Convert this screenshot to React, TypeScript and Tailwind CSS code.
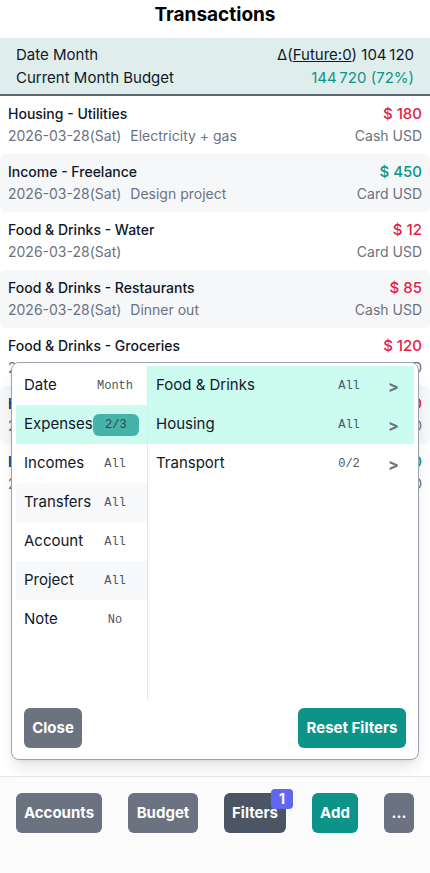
import React from "react";

type Row = { title: string; amount: string; income?: boolean; date: string; note?: string; acct: string };

const rows: Row[] = [
  { title: "Housing - Utilities", amount: "$ 180", date: "2026-03-28(Sat)", note: "Electricity + gas", acct: "Cash USD" },
  { title: "Income - Freelance", amount: "$ 450", income: true, date: "2026-03-28(Sat)", note: "Design project", acct: "Card USD" },
  { title: "Food & Drinks - Water", amount: "$ 12", date: "2026-03-28(Sat)", acct: "Card USD" },
  { title: "Food & Drinks - Restaurants", amount: "$ 85", date: "2026-03-28(Sat)", note: "Dinner out", acct: "Cash USD" },
  { title: "Food & Drinks - Groceries", amount: "$ 120", date: "2026-03-27(Fri)", note: "Weekly shopping", acct: "Card USD" },
  { title: "Housing - Rent", amount: "$ 1 200", date: "2026-03-25(Wed)", note: "March rent", acct: "Bank USD" },
  { title: "Income - Salary", amount: "$ 3 400", income: true, date: "2026-03-25(Wed)", note: "Monthly salary", acct: "Bank USD" },
];

const leftItems: { label: string; value: string; active?: boolean; badge?: boolean; alt?: boolean }[] = [
  { label: "Date", value: "Month" },
  { label: "Expenses", value: "2/3", active: true, badge: true },
  { label: "Incomes", value: "All" },
  { label: "Transfers", value: "All", alt: true },
  { label: "Account", value: "All" },
  { label: "Project", value: "All", alt: true },
  { label: "Note", value: "No" },
];

const rightItems: { label: string; value: string; active?: boolean }[] = [
  { label: "Food & Drinks", value: "All", active: true },
  { label: "Housing", value: "All", active: true },
  { label: "Transport", value: "0/2" },
];

export default function App() {
  return (
    <div className="relative flex h-[873px] w-[430px] flex-col overflow-hidden bg-white font-[family-name:Inter,'Liberation_Sans',sans-serif] text-[#111827]">
      {/* Header */}
      <div className="flex h-[38px] shrink-0 justify-center pt-px">
        <h1 className="text-[19px] font-bold leading-7 text-black">Transactions</h1>
      </div>

      {/* Summary */}
      <div className="shrink-0 border-b-2 border-[#5b6670] bg-[#dfeeed] px-4 py-[5px] text-[15px] leading-[23px]">
        <div className="flex justify-between">
          <span>Date Month</span>
          <span>
            Δ(<span className="underline">Future:0</span>) 104&#8201;120
          </span>
        </div>
        <div className="flex justify-between">
          <span>Current Month Budget</span>
          <span className="text-[#0d9488]">144&#8201;720 (72%)</span>
        </div>
      </div>

      {/* List */}
      <div className="min-h-0 flex-1 overflow-hidden">
        {rows.map((r, i) => (
          <div
            key={i}
            className={`rounded-md px-2 pb-[7px] pt-[7px] text-[14px] leading-[22px] ${i % 2 === 1 ? "bg-[#f6f7f9]" : "bg-white"}`}
          >
            <div className="flex justify-between">
              <span className="font-medium text-[#111827]">{r.title}</span>
              <span className={`text-[15px] font-medium ${r.income ? "text-[#0d9488]" : "text-[#e11d48]"}`}>{r.amount}</span>
            </div>
            <div className="flex justify-between text-[#6b7280]">
              <span>
                {r.date}
                {r.note ? <span className="ml-[9px]">{r.note}</span> : null}
              </span>
              <span>{r.acct}</span>
            </div>
          </div>
        ))}
      </div>

      {/* Bottom bar */}
      <div className="h-[97px] shrink-0 border-t border-[#e5e7eb] bg-[#fbfbfb] pt-[16px]">
        <div className="flex gap-[26px] px-4 text-[15px] font-bold leading-5 text-white">
          <button className="h-10 w-[86px] rounded-md bg-[#6b7280]">Accounts</button>
          <button className="h-10 w-[70px] rounded-md bg-[#6b7280]">Budget</button>
          <button className="relative h-10 w-[62px] rounded-md bg-[#4b5563]">
            Filters
            <span className="absolute -right-[7px] -top-[4px] flex h-5 w-[22px] items-center justify-center rounded bg-[#6366f1] text-[14px] font-bold text-white">
              1
            </span>
          </button>
          <button className="h-10 w-[46px] rounded-md bg-[#0d9488]">Add</button>
          <button className="h-10 w-[30px] rounded-md bg-[#6b7280]">...</button>
        </div>
      </div>

      {/* Filter popup */}
      <div className="absolute left-[11px] top-[362px] flex h-[398px] w-[408px] flex-col rounded-lg border border-[#9ca3af] bg-white px-1 pb-[11px] pt-[3px] shadow-lg">
        <div className="flex h-[334px]">
          <div className="w-[132px] border-r border-[#e5e7eb]">
            {leftItems.map((it) => (
              <div
                key={it.label}
                className={`flex h-[39px] items-center justify-between pl-2 pr-2 text-[15px] ${
                  it.active ? "bg-[#ccfbf0]" : it.alt ? "bg-[#f8f9fa]" : ""
                }`}
              >
                <span>{it.label}</span>
                <span
                  className={`flex h-[22px] w-12 items-center justify-center font-[family-name:'Liberation_Mono',monospace] text-[12px] ${
                    it.badge ? "rounded-md bg-[#45b3a9] text-[#374151]" : "text-[#4b5563]"
                  }`}
                >
                  {it.value}
                </span>
              </div>
            ))}
          </div>
          <div className="flex-1">
            {rightItems.map((it) => (
              <div
                key={it.label}
                className={`flex h-[39px] items-center pl-2 text-[15px] ${it.active ? "bg-[#ccfbf0]" : ""}`}
              >
                <span className="flex-1">{it.label}</span>
                <span className="w-12 text-center font-[family-name:'Liberation_Mono',monospace] text-[12px] text-[#4b5563]">
                  {it.value}
                </span>
                <span className="w-[41px] text-center text-[16px] font-bold text-[#6b7280]">&gt;</span>
              </div>
            ))}
          </div>
        </div>
        <div className="mt-2 flex justify-between px-2 text-[15px] font-bold text-white">
          <button className="h-10 w-[58px] rounded-md bg-[#6b7280]">Close</button>
          <button className="h-10 w-[108px] rounded-md bg-[#0d9488]">Reset Filters</button>
        </div>
      </div>
    </div>
  );
}
